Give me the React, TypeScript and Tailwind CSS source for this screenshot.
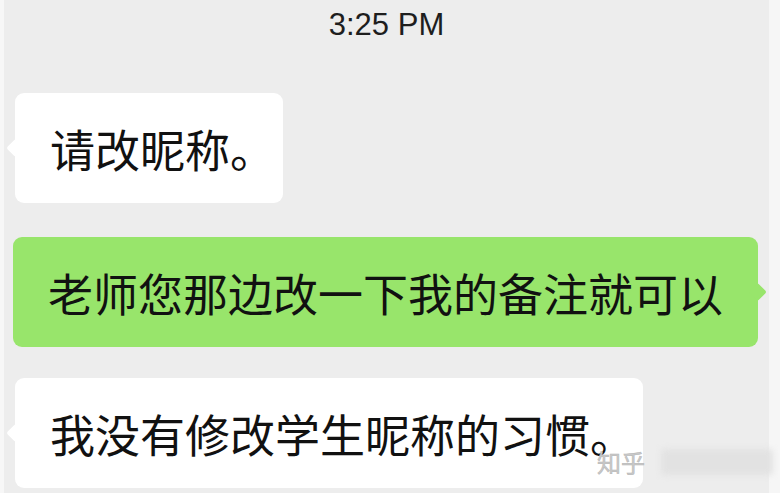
import React from 'react'

const cjk = { fontFamily: '"Noto Sans CJK SC", "Noto Sans", sans-serif' }

function Bubble({ text, mine, className }: { text: string; mine?: boolean; className?: string }) {
  return (
    <div className={`relative h-[110px] flex items-center rounded-[9px] ${mine ? 'bg-[#98e56b]' : 'bg-white'} ${className ?? ''}`}>
      <span
        className={`absolute top-1/2 -translate-y-1/2 w-[13px] h-[13px] rotate-45 rounded-[2px] ${
          mine ? 'bg-[#98e56b] right-[-6px]' : 'bg-white left-[-6px]'
        }`}
      />
      <span className="relative text-[45px] leading-[45px] text-[#111] whitespace-nowrap" style={cjk}>
        {text}
      </span>
    </div>
  )
}

export default function App() {
  return (
    <div className="relative w-[780px] h-[493px] flex overflow-hidden bg-[#ededed]">
      <div className="w-[4px] bg-[#f7f7f7]" />

      <div className="flex-1 flex flex-col">
        <div
          className="pt-[9px] text-center text-[31px] leading-[31px] text-[#1e1e1e]"
          style={{ fontFamily: '"Liberation Sans", Arial, sans-serif' }}
        >
          3:25 PM
        </div>

        <div className="mt-[53px] pl-[11px] flex">
          <Bubble text="请改昵称。" className="pl-[35px] pr-[8px]" />
        </div>

        <div className="mt-[34px] pr-[11px] flex justify-end">
          <Bubble text="老师您那边改一下我的备注就可以" mine className="px-[35px]" />
        </div>

        <div className="mt-[31px] pl-[11px] flex">
          <Bubble text="我没有修改学生昵称的习惯。" className="pl-[35px] pr-[8px]" />
        </div>
      </div>

      <div className="w-[11px] bg-[#f6f6f6]" />

      {/* watermark */}
      <div className="absolute left-[597px] top-[448px] flex items-center gap-[16px]">
        <span
          className="text-[24px] leading-[28px] text-[#c9c9c9]"
          style={{ ...cjk, WebkitTextStroke: '0.5px #b5b5b5' }}
        >
          知乎
        </span>
        <span className="w-[112px] h-[26px] bg-[#e2e2e2] blur-[3px] rounded-[4px]" />
      </div>
    </div>
  )
}
